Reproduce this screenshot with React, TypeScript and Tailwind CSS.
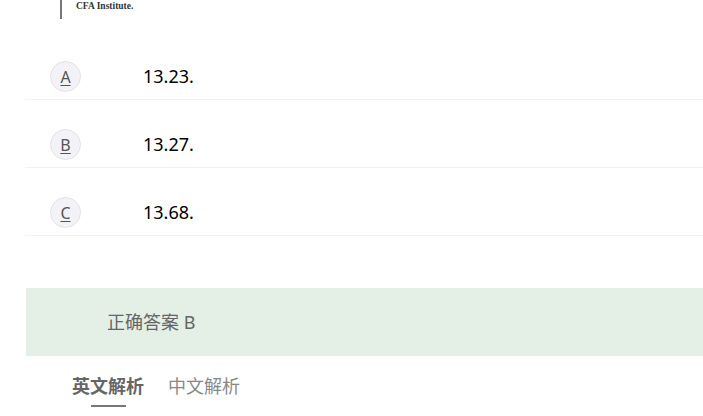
import React from 'react';

const options = [
  { key: 'A', text: '13.23.' },
  { key: 'B', text: '13.27.' },
  { key: 'C', text: '13.68.' },
];

const cjk = "font-['Noto_Sans','Noto_Sans_CJK_SC',sans-serif]";

export default function App() {
  return (
    <div className={`w-[703px] h-[416px] overflow-hidden bg-white ${cjk}`}>
      {/* cropped figure from the question */}
      <div className="h-[20px] pl-[60px] flex items-start">
        <div className="w-[2px] h-[19px] bg-[#777]" />
        <span className="ml-[14px] mt-[1px] text-[9.5px] leading-[10px] font-bold text-[#333] font-['Liberation_Serif',serif]">
          CFA Institute.
        </span>
      </div>

      <div className="ml-[25px] mt-[12px]">
        {options.map((o) => (
          <div key={o.key} className="flex items-center pt-[29px] pb-[7px] border-b border-[#f2f2f2]">
            <div className="ml-[25px] w-[31px] h-[31px] rounded-full border border-[#e3e2e8] bg-[#f3f2f7] flex items-center justify-center text-[16px] text-[#555] underline underline-offset-2">
              {o.key}
            </div>
            <div className="ml-[62px] -mt-[2px] text-[18px] text-black leading-none">{o.text}</div>
          </div>
        ))}
      </div>

      <div className="ml-[26px] mt-[52px] h-[68px] bg-[#e4efe6] flex items-center pl-[81px] text-[18px] text-[#666]">
        正确答案 B
      </div>

      <div className="ml-[72px] mt-[17px] flex gap-[24px] text-[18px] leading-[26px]">
        <div className="flex flex-col items-center">
          <span className="font-bold text-[#666]">英文解析</span>
          <div className="mt-[6px] w-[35px] h-[2px] bg-[#777]" />
        </div>
        <span className="text-[#888]">中文解析</span>
      </div>
    </div>
  );
}
